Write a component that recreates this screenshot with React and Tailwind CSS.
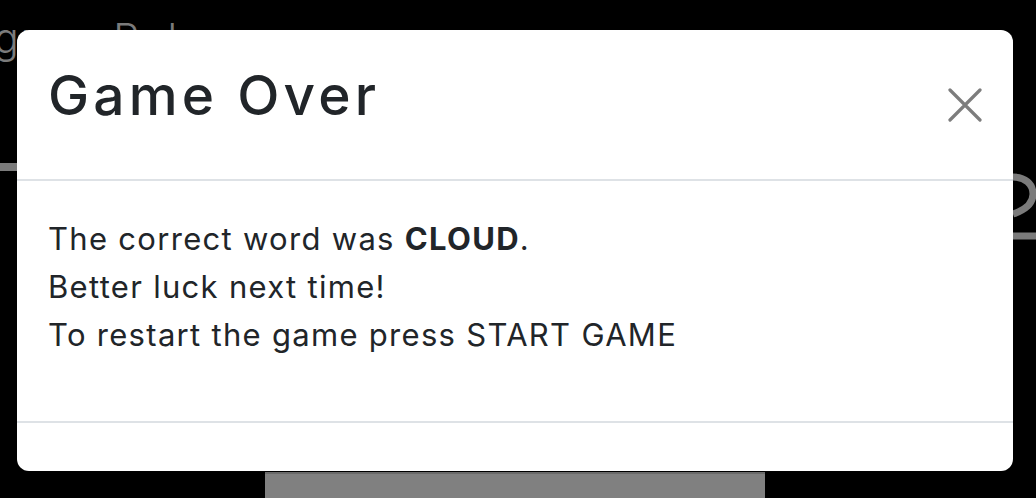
import React from 'react';

function CloseIcon() {
  return (
    <svg className="w-[34px] h-[34px]" viewBox="0 0 34 34" fill="none" stroke="#7d7d7d" strokeWidth="3.2" strokeLinecap="round">
      <path d="M2 2l30 30M32 2L2 32" />
    </svg>
  );
}

export default function App() {
  return (
    <div className="relative w-[1036px] h-[498px] bg-black overflow-hidden font-['Inter',sans-serif]">
      {/* page behind the overlay */}
      <p className="absolute left-[-6px] top-[18px] text-[41px] font-light text-[#7b7b7b] leading-none tracking-[2px]">
        gram Rules
      </p>
      <div className="absolute left-0 top-[163px] w-[20px] h-[8px] bg-[#7b7b7b]" />
      <svg className="absolute left-[1010px] top-[172px]" width="30" height="70" viewBox="0 0 30 70" fill="none" stroke="#7b7b7b" strokeWidth="7">
        <path d="M3 5c12 0 20 7 20 17 0 10-8 16-20 20" />
        <path d="M3 64h26" />
      </svg>
      <div className="absolute left-[265px] top-[472px] w-[500px] h-[30px] bg-[#808080] border-t-2 border-[#6a6a6a]" />

      {/* modal */}
      <div className="absolute left-[17px] top-[30px] w-[996px] h-[441px] bg-white rounded-[12px] flex flex-col">
        <div className="h-[151px] flex items-center justify-between pl-[31px] pr-[31px] border-b-2 border-[#dee2e6]">
          <h1 className="text-[55px] font-medium text-[#212529] tracking-[4.2px] leading-none mt-[-18px]">Game Over</h1>
          <CloseIcon />
        </div>
        <div className="flex-1 px-[31px] pt-[34px] text-[31px] leading-[48px] text-[#212529] tracking-[1.3px]">
          <p>The correct word was <b className="font-bold">CLOUD</b>.</p>
          <p>Better luck next time!</p>
          <p>To restart the game press START GAME</p>
        </div>
        <div className="h-[50px] border-t-2 border-[#dee2e6]" />
      </div>
    </div>
  );
}
